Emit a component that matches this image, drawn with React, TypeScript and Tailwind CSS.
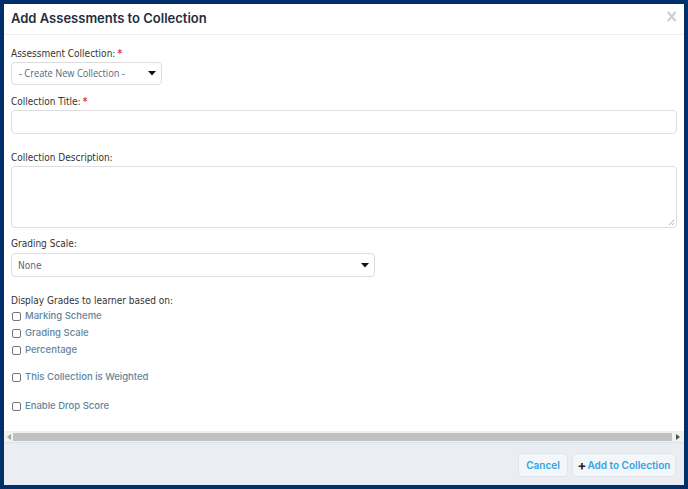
import React from 'react'

const labelFont = { fontFamily: '"DejaVu Sans Condensed", "DejaVu Sans", Verdana, sans-serif' }
const popFont = { fontFamily: 'Inter, "Noto Sans", sans-serif' }

const Caret = () => (
    <svg width="8" height="5" viewBox="0 0 8 5" className="shrink-0">
        <path d="M0 0 H8 L4 4.5 Z" fill="#111" />
    </svg>
)

const Label = ({ text, required, className = '' }: { text: string; required?: boolean; className?: string }) => (
    <div className={`h-[15px] leading-[15px] text-[10px] text-[#333] ${className}`} style={labelFont}>
        {text}
        {required && <span className="text-[#e8334a] font-bold ml-[2px]">*</span>}
    </div>
)

const Check = ({ text, className = '' }: { text: string; className?: string }) => (
    <label className={`flex items-center h-[17px] ${className}`}>
        <span className="ml-[1px] w-[9px] h-[9px] rounded-[2px] border border-[#767676] bg-white" />
        <span className="ml-[4px] text-[9.5px] font-medium text-[#62869c]" style={popFont}>
            {text}
        </span>
    </label>
)

export default function App() {
    return (
        <div className="w-[688px] h-[489px] bg-[#002f6c] p-[4px]">
            <div className="flex flex-col h-full bg-white">
                {/* Header */}
                <div className="h-[31px] shrink-0 border-b border-[#eeeeee] pl-[7px] pr-[6px] flex items-center justify-between">
                    <h1 className="text-[13px] font-semibold text-[#1f2d3d] leading-none mt-[-2px]" style={popFont}>
                        Add Assessments to Collection
                    </h1>
                    <span className="text-[17px] font-bold text-[#cccccc] leading-none mt-[-5px]" style={labelFont}>
                        ×
                    </span>
                </div>

                {/* Body */}
                <div className="flex-1 px-[7px] pt-[11px]">
                    <Label text="Assessment Collection:" required className="mb-[1px]" />
                    <div className="w-[151px] h-[23px] rounded-[4px] border border-[#dddddd] flex items-center justify-between pl-[7px] pr-[5px]">
                        <span
                            className="text-[11px] text-[#4f6b7e] whitespace-nowrap origin-left scale-x-[0.84]"
                            style={{ fontFamily: '"Open Sans", sans-serif' }}
                        >
                            - Create New Collection -
                        </span>
                        <Caret />
                    </div>

                    <Label text="Collection Title:" required className="mt-[9px] mb-[1px]" />
                    <div className="h-[24px] rounded-[4px] border border-[#dddddd]" />

                    <Label text="Collection Description:" className="mt-[16px] mb-[1px]" />
                    <div className="relative h-[62px] rounded-[4px] border border-[#dddddd]">
                        <svg width="7" height="7" viewBox="0 0 7 7" className="absolute right-[1px] bottom-[1px]">
                            <path d="M1 6 L6 1 M4 6 L6 4" stroke="#999" strokeWidth="0.8" />
                        </svg>
                    </div>

                    <Label text="Grading Scale:" className="mt-[8px] mb-[2px]" />
                    <div className="w-[364px] h-[24px] rounded-[4px] border border-[#dddddd] flex items-center justify-between pl-[6px] pr-[5px]">
                        <span className="text-[10px] text-[#4f6b7e]" style={labelFont}>None</span>
                        <Caret />
                    </div>

                    <Label text="Display Grades to learner based on:" className="mt-[16px]" />
                    <Check text="Marking Scheme" />
                    <Check text="Grading Scale" />
                    <Check text="Percentage" />
                    <Check text="This Collection is Weighted" className="mt-[10px]" />
                    <Check text="Enable Drop Score" className="mt-[12px]" />
                </div>

                {/* Horizontal scrollbar */}
                <div className="h-[11px] shrink-0 flex items-center bg-[#f1f1f1]">
                    <div className="w-[9px] flex justify-center">
                        <svg width="4" height="6" viewBox="0 0 4 6"><path d="M4 0 V6 L0 3 Z" fill="#a3a3a3" /></svg>
                    </div>
                    <div className="flex-1 h-[8px] bg-[#c1c1c1]" />
                    <div className="w-[12px] flex justify-center">
                        <svg width="4" height="6" viewBox="0 0 4 6"><path d="M0 0 V6 L4 3 Z" fill="#505050" /></svg>
                    </div>
                </div>

                {/* Footer */}
                <div className="h-[43px] shrink-0 border-t border-[#dde3e8] bg-[#eaeef2] flex items-center justify-end gap-[4px] pr-[8px] pt-[2px]">
                    <button className="h-[24px] w-[50px] rounded-[4px] border border-[#dfe5ea] bg-[#f4f7fa] text-[10px] font-semibold text-[#2ea3e6]" style={popFont}>
                        Cancel
                    </button>
                    <button className="h-[24px] w-[104px] rounded-[4px] border border-[#dfe5ea] bg-[#f4f7fa] text-[10px] font-semibold text-[#2ea3e6] flex items-center justify-center" style={popFont}>
                        <span className="text-[#222] text-[13px] font-bold leading-none mr-[1px]">+</span>
                        Add to Collection
                    </button>
                </div>
            </div>
        </div>
    )
}
